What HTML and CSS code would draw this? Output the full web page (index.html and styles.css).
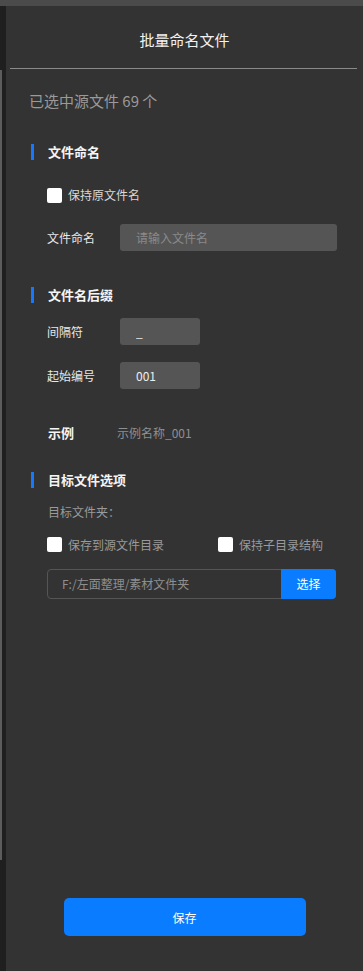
FILE: index.html
```html
<!DOCTYPE html>
<html lang="zh-CN">
  <head>
    <meta charset="UTF-8" />
    <meta name="viewport" content="width=device-width, initial-scale=1.0" />
    <title>批量命名文件</title>
    <link rel="stylesheet" href="styles.css">
  </head>
  <body>
    <div class="top-strip"></div>
    <div class="frame">
      <div class="side"><div class="side-line"></div></div>
      <main class="panel">
        <header class="panel-header">批量命名文件</header>
        <div class="divider"></div>

        <section class="content">
          <p class="selected">已选中源文件 69 个</p>

          <h3 class="section-title title-first">文件命名</h3>
          <label class="check check-first">
            <span class="box"></span>
            <span>保持原文件名</span>
          </label>
          <div class="row row-name">
            <label class="row-label">文件命名</label>
            <input class="field field-wide" type="text" placeholder="请输入文件名" />
          </div>

          <h3 class="section-title title-suffix">文件名后缀</h3>
          <div class="row row-sep">
            <label class="row-label">间隔符</label>
            <input class="field field-short" type="text" value="_" />
          </div>
          <div class="row row-start">
            <label class="row-label">起始编号</label>
            <input class="field field-short" type="text" value="001" />
          </div>
          <div class="example">
            <span class="example-label">示例</span>
            <span class="example-value">示例名称_001</span>
          </div>

          <h3 class="section-title title-target">目标文件选项</h3>
          <p class="target-label">目标文件夹：</p>
          <div class="check-row">
            <label class="check check-source">
              <span class="box"></span>
              <span>保存到源文件目录</span>
            </label>
            <label class="check">
              <span class="box"></span>
              <span>保持子目录结构</span>
            </label>
          </div>
          <div class="path">
            <span class="path-text">F:/左面整理/素材文件夹</span>
            <button class="path-btn">选择</button>
          </div>
        </section>

        <div class="footer">
          <button class="save-btn">保存</button>
        </div>
      </main>
    </div>
  </body>
</html>
```

FILE: styles.css
```css
html,
body {
  margin: 0;
  padding: 0;
}
body {
  background: #1f1f1f;
  font-family: "Noto Sans CJK SC", "Noto Sans", sans-serif;
  color: #e6e6e6;
  width: 363px;
  height: 971px;
  overflow: hidden;
}
.top-strip {
  height: 6px;
  background: #4b4b4b;
}
.frame {
  display: flex;
  height: 965px;
}
.side {
  width: 6px;
  background: #1f1f1f;
}
.side-line {
  width: 2px;
  height: 790px;
  margin-top: 64px;
  background: #5c5c5c;
}
.panel {
  flex: 1;
  background: #333333;
  display: flex;
  flex-direction: column;
}
.panel-header {
  height: 56px;
  padding-top: 6px;
  line-height: 56px;
  text-align: center;
  font-size: 15px;
  color: #f2f2f2;
}
.divider {
  height: 1px;
  background: #8a8a8a;
  margin: 0 6px 0 4px;
}
.content {
  padding: 0 26px 0 23px;
}
.selected {
  margin: 22px 0 0;
  font-size: 15px;
  line-height: 20px;
  color: #9a9a9a;
}
.section-title {
  margin: 0 0 0 2px;
  padding-left: 14px;
  border-left: 3px solid #1677ff;
  font-size: 13px;
  line-height: 16px;
  font-weight: bold;
  color: #f5f5f5;
}
.title-first {
  margin-top: 33px;
}
.title-suffix {
  margin-top: 36px;
}
.title-target {
  margin-top: 30px;
}
.check {
  display: inline-flex;
  align-items: center;
  gap: 6px;
  font-size: 12px;
  color: #d8d8d8;
  line-height: 16px;
}
.box {
  width: 15px;
  height: 15px;
  background: #ffffff;
  border-radius: 2px;
}
.check-first {
  margin: 27px 0 0 18px;
}
.row {
  display: flex;
  align-items: center;
  padding-left: 18px;
}
.row-label {
  width: 73px;
  font-size: 12px;
  color: #e8e8e8;
}
.row-name {
  margin-top: 16px;
}
.row-sep {
  margin-top: 15px;
}
.row-start {
  margin-top: 17px;
}
.field {
  box-sizing: border-box;
  height: 27px;
  border: none;
  border-radius: 3px;
  background: #555555;
  color: #eeeeee;
  font-family: inherit;
  font-size: 12px;
  padding: 0 16px;
  outline: none;
}
.field::placeholder {
  color: #8a8a8a;
}
.field-wide {
  flex: 1;
}
.field-short {
  width: 80px;
}
.example {
  display: flex;
  align-items: center;
  margin-top: 35px;
  padding-left: 19px;
  line-height: 18px;
}
.example-label {
  width: 69px;
  font-size: 13px;
  font-weight: bold;
  color: #f5f5f5;
}
.example-value {
  font-size: 12px;
  color: #8f8f8f;
}
.target-label {
  margin: 15px 0 0 19px;
  font-size: 12px;
  line-height: 18px;
  color: #9a9a9a;
}
.check-row {
  display: flex;
  margin: 16px 0 0 18px;
}
.check-row .check {
  color: #9a9a9a;
}
.check-source {
  width: 171px;
}
.path {
  display: flex;
  height: 30px;
  margin: 16px 1px 0 18px;
  border: 1px solid #555555;
  border-radius: 4px;
  box-sizing: border-box;
}
.path-text {
  flex: 1;
  padding-left: 14px;
  line-height: 28px;
  font-size: 12px;
  color: #8f8f8f;
}
.path-btn {
  width: 55px;
  margin: -1px -1px -1px 0;
  border: none;
  border-radius: 0 4px 4px 0;
  background: #0a7cff;
  color: #ffffff;
  font-family: inherit;
  font-size: 12px;
}
.footer {
  margin-top: auto;
  padding-bottom: 35px;
  display: flex;
  justify-content: center;
}
.save-btn {
  width: 242px;
  height: 38px;
  border: none;
  border-radius: 5px;
  background: #0a7cff;
  color: #ffffff;
  font-family: inherit;
  font-size: 12px;
}
```
